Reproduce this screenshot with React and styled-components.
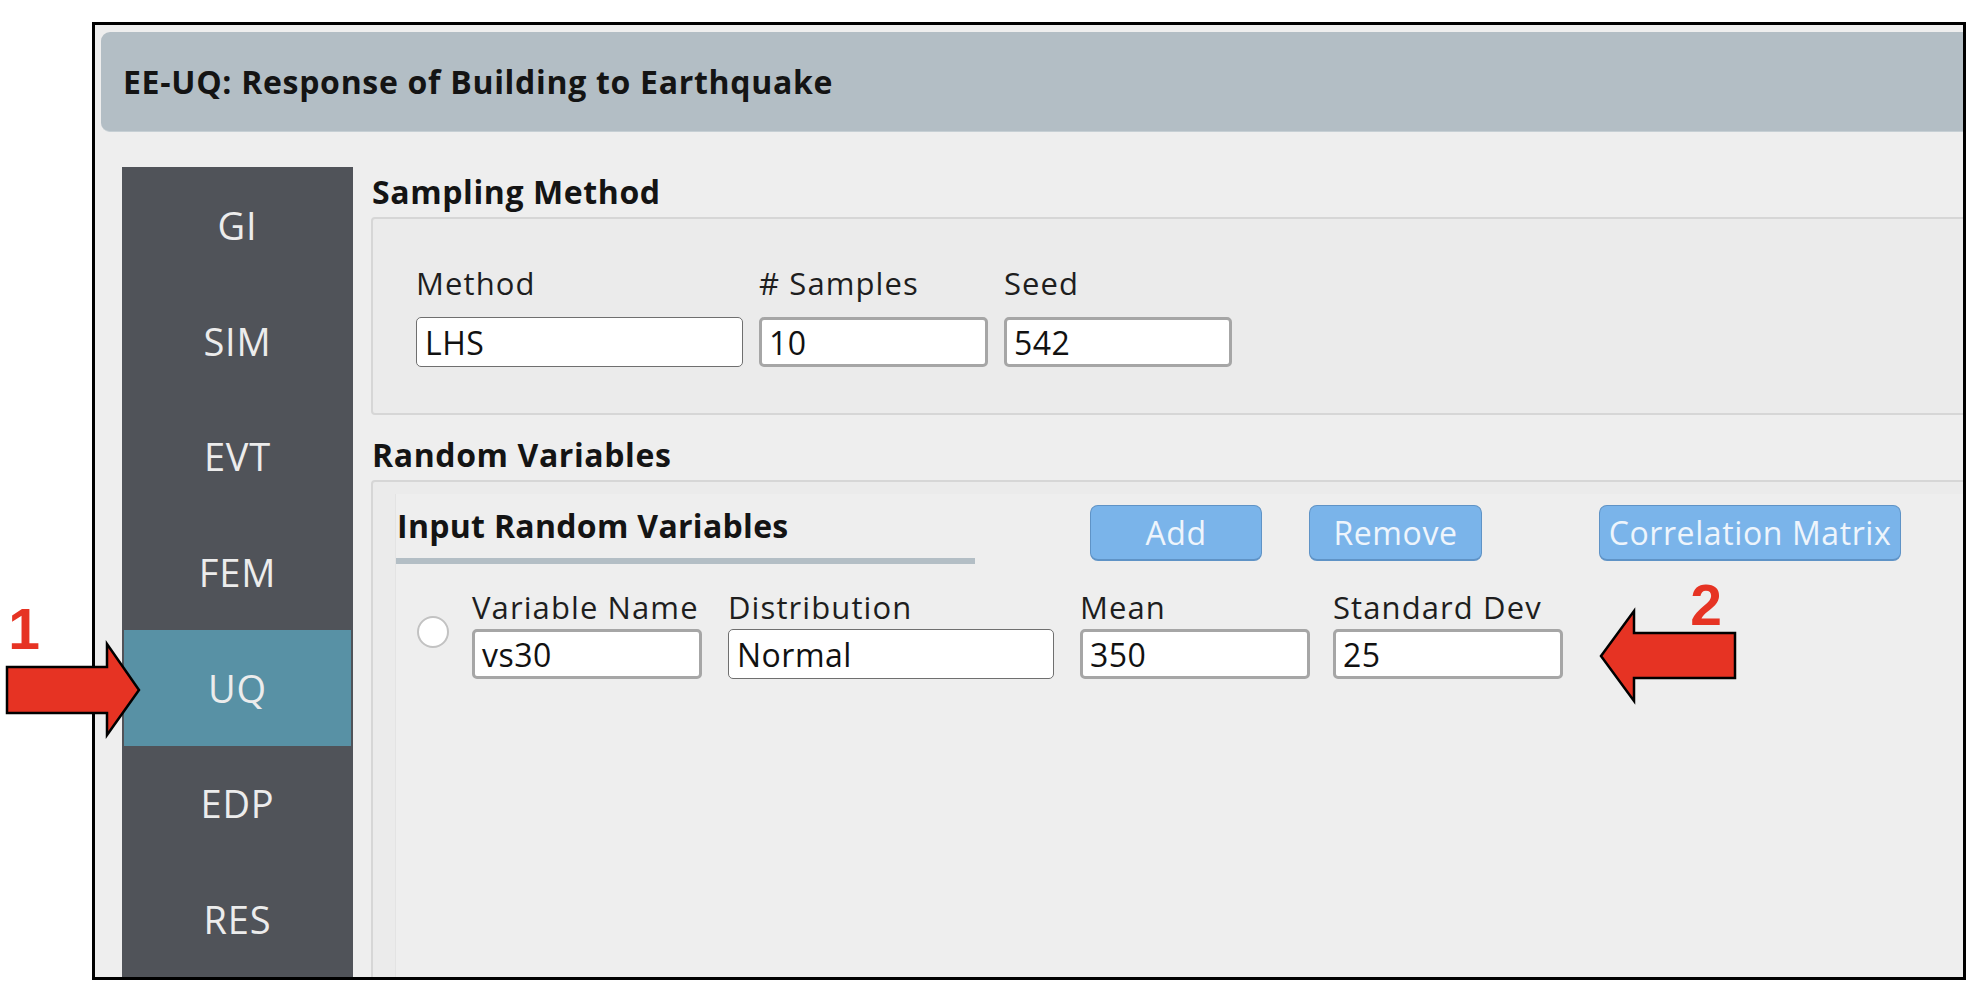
import React from 'react';
import styled, { createGlobalStyle } from 'styled-components';

const GlobalStyle = createGlobalStyle`
    body {
        margin: 0;
        background: #ffffff;
        font-family: "Open Sans", "Noto Sans", sans-serif;
    }
`;

const Stage = styled.div`
    position: relative;
    width: 1976px;
    height: 992px;
    padding: 22px 0 0 92px;
    box-sizing: border-box;
    overflow: hidden;
`;

const Frame = styled.div`
    width: 1874px;
    height: 958px;
    border: 3px solid #000;
    background: #eeeeee;
    box-sizing: border-box;
    padding: 7px 0 0 6px;
    display: flex;
    flex-direction: column;
    overflow: hidden;
`;

const Header = styled.div`
    height: 100px;
    flex-shrink: 0;
    background: #b3bec5;
    border-radius: 9px 0 0 9px;
    border-bottom: 1px solid #c6cfd4;
    box-sizing: border-box;
    padding-left: 22px;
    display: flex;
    align-items: center;
    font-size: 32px;
    font-weight: 700;
    color: #141414;
    letter-spacing: 0.7px;
`;

const Body = styled.div`
    flex: 1;
    min-height: 0;
    display: flex;
    margin: 35px 0 0 21px;
`;

const Sidebar = styled.div`
    width: 231px;
    flex-shrink: 0;
    background: #505359;
    display: flex;
    flex-direction: column;
`;

const NavItem = styled.div`
    flex: 1;
    display: flex;
    align-items: center;
    justify-content: center;
    font-size: 38px;
    letter-spacing: 0.8px;
    color: #ececec;
    background: ${({ $active }) => ($active ? '#5891a5' : 'transparent')};
    margin: 0 ${({ $active }) => ($active ? '2px' : '0')};
`;

const Content = styled.div`
    flex: 1;
    display: flex;
    flex-direction: column;
    margin: 0 -12px 0 18px;
`;

const SectionTitle = styled.div`
    height: 50px;
    line-height: 50px;
    margin-top: ${({ $top }) => $top || 0}px;
    padding-left: 1px;
    font-size: 32px;
    font-weight: 700;
    color: #141414;
    letter-spacing: 0.6px;
`;

const GroupBox = styled.div`
    border: 2px solid #d6d6d6;
    border-radius: 4px;
    background: #ebebeb;
    padding: 46px 0 46px 43px;
    flex-shrink: 0;
`;

const FieldRow = styled.div`
    display: flex;
    align-items: flex-end;
    gap: ${({ $gap }) => $gap}px;
`;

const Field = styled.div`
    width: ${({ $w }) => $w}px;
    margin-left: ${({ $ml }) => $ml || 0}px;
    display: flex;
    flex-direction: column;
    gap: ${({ $gap }) => $gap}px;
`;

const Label = styled.div`
    font-size: 31px;
    line-height: 36px;
    letter-spacing: 1.1px;
    color: #1e1e1e;
    white-space: nowrap;
`;

const TextBox = styled.div`
    height: 50px;
    box-sizing: border-box;
    border: ${({ $thin }) => ($thin ? '1.5px solid #6f6f6f' : '3px solid #a6a6a6')};
    border-radius: 5px;
    background: #fff;
    padding-left: ${({ $thin }) => ($thin ? '8px' : '7px')};
    display: flex;
    align-items: center;
    font-size: 32px;
    letter-spacing: 0.5px;
    color: #111;
`;

const RvBox = styled.div`
    flex: 1;
    border: 2px solid #d6d6d6;
    border-radius: 4px;
    background: #ebebeb;
    padding: 12px 0 0 22px;
    margin-bottom: -6px;
    display: flex;
`;

const InnerPanel = styled.div`
    flex: 1;
    background: #eeeeee;
    border-left: 1px solid #e3e3e3;
    display: flex;
    flex-direction: column;
`;

const PanelHeader = styled.div`
    display: flex;
    align-items: flex-start;
`;

const PanelTitle = styled.div`
    width: 578px;
    height: 64px;
    line-height: 64px;
    padding-left: 1px;
    border-bottom: 6px solid #b3bec5;
    font-size: 32px;
    font-weight: 700;
    color: #141414;
    letter-spacing: 0.3px;
    white-space: nowrap;
`;

const Button = styled.div`
    width: ${({ $w }) => $w}px;
    margin-left: ${({ $ml }) => $ml}px;
    margin-top: 11px;
    height: 56px;
    box-sizing: border-box;
    background: #7ab4ea;
    border: 1.5px solid #5f93c6;
    border-bottom-width: 2.5px;
    border-radius: 8px;
    display: flex;
    align-items: center;
    justify-content: center;
    font-size: 32px;
    letter-spacing: 0.6px;
    color: #eef5fc;
    white-space: nowrap;
`;

const VarRow = styled.div`
    display: flex;
    align-items: flex-end;
    margin-top: 25px;
    padding-left: 21px;
`;

const Radio = styled.div`
    width: 32px;
    height: 32px;
    box-sizing: border-box;
    border-radius: 50%;
    border: 2px solid #c2c2c2;
    background: #fff;
    margin: 0 23px 31px 0;
    flex-shrink: 0;
`;

const Marker = styled.div`
    position: absolute;
    left: ${({ $x }) => $x}px;
    top: ${({ $y }) => $y}px;
    width: 40px;
    text-align: center;
    font-family: "Liberation Sans", Arial, sans-serif;
    font-weight: 700;
    font-size: 57px;
    line-height: 57px;
    color: #e63323;
`;

const Overlay = styled.svg`
    position: absolute;
    left: 0;
    top: 0;
    pointer-events: none;
`;

const navItems = ['GI', 'SIM', 'EVT', 'FEM', 'UQ', 'EDP', 'RES'];

const App = () => {
    return (
        <>
            <GlobalStyle />
            <Stage>
                <Frame>
                    <Header>EE-UQ: Response of Building to Earthquake</Header>
                    <Body>
                        <Sidebar>
                            {navItems.map((item) => (
                                <NavItem key={item} $active={item === 'UQ'}>
                                    {item}
                                </NavItem>
                            ))}
                        </Sidebar>

                        <Content>
                            <SectionTitle>Sampling Method</SectionTitle>
                            <GroupBox>
                                <FieldRow $gap={16}>
                                    <Field $w={327} $gap={16}>
                                        <Label>Method</Label>
                                        <TextBox $thin>LHS</TextBox>
                                    </Field>
                                    <Field $w={229} $gap={16}>
                                        <Label># Samples</Label>
                                        <TextBox>10</TextBox>
                                    </Field>
                                    <Field $w={228} $gap={16}>
                                        <Label>Seed</Label>
                                        <TextBox>542</TextBox>
                                    </Field>
                                </FieldRow>
                            </GroupBox>

                            <SectionTitle $top={15}>Random Variables</SectionTitle>
                            <RvBox>
                                <InnerPanel>
                                    <PanelHeader>
                                        <PanelTitle>Input Random Variables</PanelTitle>
                                        <Button $w={172} $ml={115}>Add</Button>
                                        <Button $w={173} $ml={47}>Remove</Button>
                                        <Button $w={302} $ml={117}>Correlation Matrix</Button>
                                    </PanelHeader>

                                    <VarRow>
                                        <Radio />
                                        <FieldRow $gap={26}>
                                            <Field $w={230} $gap={4}>
                                                <Label>Variable Name</Label>
                                                <TextBox>vs30</TextBox>
                                            </Field>
                                            <Field $w={326} $gap={4}>
                                                <Label>Distribution</Label>
                                                <TextBox $thin>Normal</TextBox>
                                            </Field>
                                            <Field $w={230} $gap={4}>
                                                <Label>Mean</Label>
                                                <TextBox>350</TextBox>
                                            </Field>
                                            <Field $w={230} $gap={4} $ml={-3}>
                                                <Label>Standard Dev</Label>
                                                <TextBox>25</TextBox>
                                            </Field>
                                        </FieldRow>
                                    </VarRow>
                                </InnerPanel>
                            </RvBox>
                        </Content>
                    </Body>
                </Frame>

                <Overlay width="1976" height="992" viewBox="0 0 1976 992">
                    <polygon
                        points="7,667 107,667 107,644 139,690 107,735 107,713 7,713"
                        fill="#e63323"
                        stroke="#000"
                        strokeWidth="2.5"
                        strokeLinejoin="miter"
                    />
                    <polygon
                        points="1735,633 1634,633 1634,611 1601,656 1634,701 1634,678 1735,678"
                        fill="#e63323"
                        stroke="#000"
                        strokeWidth="2.5"
                        strokeLinejoin="miter"
                    />
                </Overlay>
                <Marker $x={4} $y={601}>1</Marker>
                <Marker $x={1686} $y={577}>2</Marker>
            </Stage>
        </>
    );
};

export default App;
